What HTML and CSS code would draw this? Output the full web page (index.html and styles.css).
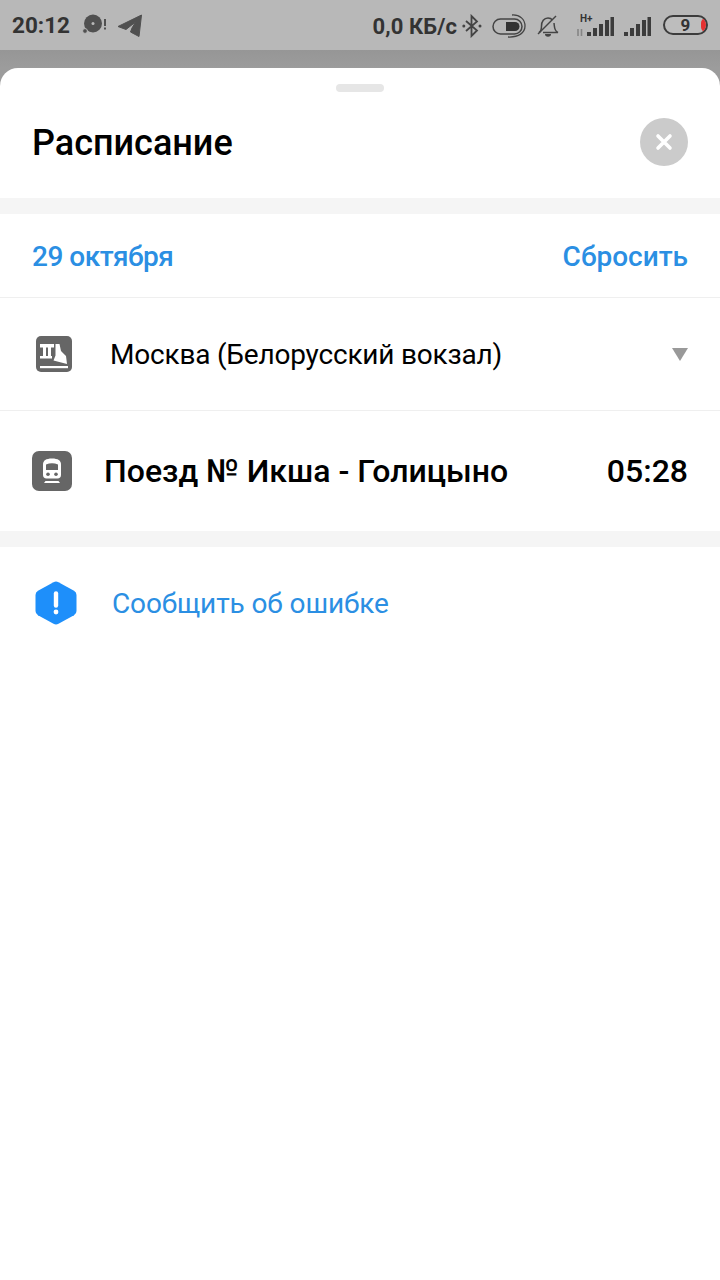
FILE: index.html
```html
<!DOCTYPE html>
<html lang="en">
<head>
  <meta charset="UTF-8">
  <meta name="viewport" content="width=device-width, initial-scale=1.0">
  <title>Расписание</title>
  <link rel="stylesheet" href="styles.css">
</head>
<body>

<div class="statusBar">
  <div class="statusLeft">
    <span class="clock">20:12</span>
    <svg class="icoDisc" width="26" height="24" viewBox="0 0 26 24">
      <circle cx="11" cy="10.500" r="9" fill="#505050"/>
      <circle cx="11" cy="10.500" r="1.500" fill="#b8b8b8"/>
      <circle cx="3" cy="18" r="2.400" fill="#505050" stroke="#b8b8b8" stroke-width="1"/>
      <rect x="22" y="6" width="2" height="7" fill="#505050"/>
      <rect x="22" y="14.500" width="2" height="2" fill="#505050"/>
    </svg>
    <svg class="icoPlane" width="26" height="24" viewBox="0 0 26 24">
      <path d="M1 12.500 24.500 1 22 22.500 13.500 18 15 14 18.500 8 9 15.500 Z" fill="#505050" stroke="#505050" stroke-linejoin="round"/>
    </svg>
  </div>
  <div class="statusRight">
    <span class="speed">0,0 КБ/с</span>
    <svg class="icoBt" width="20" height="24" viewBox="0 0 20 24">
      <path d="M4 7 15 16.500 9.500 22V2l5.500 5.500L4 17" fill="none" stroke="#444" stroke-width="1.800"/>
      <circle cx="1.800" cy="12" r="1.500" fill="#444"/>
      <circle cx="18" cy="12" r="1.500" fill="#444"/>
    </svg>
    <svg class="icoDnd" width="34" height="24" viewBox="0 0 34 24">
      <rect x="1" y="5" width="29" height="15" rx="7.500" fill="none" stroke="#444" stroke-width="1.500"/>
      <path d="M14 8h9a4.500 4.500 0 0 1 0 9h-9z" fill="#333"/>
      <path d="M20 1c8-.5 13 4.500 13 11S27 23.500 16 23" fill="none" stroke="#444" stroke-width="1.300"/>
    </svg>
    <svg class="icoBell" width="22" height="22" viewBox="0 0 22 22">
      <path d="M2 17.500c2-1 2.500-3 2.500-6.500C4.500 6.500 7 3 11 3c2 0 3.500.8 4.500 2M17 8c.5 3.500 0 8 4 9.500H6" fill="none" stroke="#444" stroke-width="1.500"/>
      <path d="M1 19 19 1" stroke="#444" stroke-width="1.500"/>
      <path d="M8 19h6a3 2.800 0 0 1-6 0z" fill="#444"/>
    </svg>
    <div class="signal">
      <span class="hPlus">H+</span>
      <svg width="38" height="21" viewBox="0 0 38 21">
        <path d="M2 12v7M5.500 12v7" stroke="#858585" stroke-width="1.600"/>
        <g fill="#3c3c3c">
          <rect x="11" y="15" width="4" height="4"/>
          <rect x="17" y="11" width="4" height="8"/>
          <rect x="23" y="7" width="4" height="12"/>
          <rect x="29" y="3" width="4" height="16"/>
          <rect x="34.500" y="0" width="3.500" height="19"/>
        </g>
      </svg>
    </div>
    <svg class="bars" width="27" height="21" viewBox="0 0 27 21">
      <g fill="#3c3c3c">
        <rect x="0" y="15" width="4" height="4"/>
        <rect x="6" y="11" width="4" height="8"/>
        <rect x="12" y="7" width="4" height="12"/>
        <rect x="18" y="3" width="4" height="16"/>
        <rect x="23.500" y="0" width="3.500" height="19"/>
      </g>
    </svg>
    <div class="battery">
      <span class="batteryNum">9</span>
      <span class="batteryLow"></span>
    </div>
  </div>
</div>

<div class="dim">
  <div class="sheet">
    <div class="handle"></div>

    <div class="header">
      <h1 class="title">Расписание</h1>
      <div class="close">
        <svg width="18" height="18" viewBox="0 0 18 18">
          <path d="M3 3l12 12M15 3 3 15" stroke="#fff" stroke-width="3.600" stroke-linecap="round"/>
        </svg>
      </div>
    </div>

    <div class="band"></div>

    <div class="dateRow">
      <span class="link linkDate">29 октября</span>
      <span class="link">Сбросить</span>
    </div>

    <div class="stationRow">
      <svg class="icoStation" width="36" height="36" viewBox="0 0 36 36">
        <rect width="36" height="36" rx="5" fill="#666"/>
        <g fill="#fff">
          <rect x="4" y="8" width="14" height="3.500"/>
          <rect x="7" y="11" width="3" height="10"/>
          <rect x="12" y="11" width="3" height="10"/>
          <rect x="4" y="20" width="12" height="2.500"/>
          <path d="M19.500 8h4l1.500 7 5 5 1 8-13.500-3.500 2-5z"/>
          <rect x="4" y="30" width="28" height="2.200"/>
        </g>
      </svg>
      <span class="stationName">Москва (Белорусский вокзал)</span>
      <span class="caret"></span>
    </div>

    <div class="trainRow">
      <svg class="icoTrain" width="40" height="40" viewBox="0 0 40 40">
        <rect width="40" height="40" rx="7" fill="#666"/>
        <path d="M20 7.500c6 0 9 2 9 6V24c0 2.200-1.300 3.500-3.500 3.500h-11c-2.200 0-3.500-1.300-3.500-3.500V13.500c0-4 3-6 9-6z" fill="#fff"/>
        <path d="M14 13.500q6-2.500 12 0V19H14z" fill="#666"/>
        <circle cx="16" cy="23.300" r="1.800" fill="#666"/>
        <circle cx="24" cy="23.300" r="1.800" fill="#666"/>
        <path d="M13.500 30h13l1.500 2H12z" fill="#fff"/>
      </svg>
      <span class="trainName">Поезд № Икша - Голицыно</span>
      <span class="trainTime">05:28</span>
    </div>

    <div class="band"></div>

    <div class="reportRow">
      <svg class="icoReport" width="42" height="44" viewBox="0 0 42 44">
        <path d="M18.500 1.200q2.500-1.200 5 0l15.500 8.600q2.500 1.500 2.500 4.200v16q0 2.700-2.500 4.200l-15.500 8.600q-2.500 1.200-5 0L3 34.200Q.5 32.700.5 30V14q0-2.700 2.500-4.200z" fill="#1e8ffa"/>
        <path d="M21 12.500v12" stroke="#fff" stroke-width="4.400" stroke-linecap="round"/>
        <circle cx="21" cy="31" r="2.400" fill="#fff"/>
      </svg>
      <span class="reportText">Сообщить об ошибке</span>
    </div>
  </div>
</div>

</body>
</html>
```

FILE: styles.css
```css
* {
  padding: 0;
  margin: 0;
  box-sizing: border-box;
}

body {
  width: 720px;
  height: 1280px;
  overflow: hidden;
  font-family: 'Roboto', 'Noto Sans', sans-serif;
  background-color: #fff;
  color: #000;
  display: flex;
  flex-direction: column;
}

.statusBar {
  height: 50px;
  background-color: #b8b8b8;
  color: #333;
  display: flex;
  justify-content: space-between;
  align-items: center;
  padding: 0 12px;
  flex-shrink: 0;
}

.statusLeft, .statusRight {
  display: flex;
  align-items: center;
}

.clock {
  font-size: 22.500px;
  font-weight: 700;
}

.icoDisc {
  margin-left: 12px;
}

.icoPlane {
  margin-left: 9px;
  margin-top: 2px;
}

.speed {
  font-size: 22px;
  font-weight: 700;
  margin-top: 2px;
  letter-spacing: 0.100px;
}

.icoBt {
  margin-left: 5px;
  margin-top: 1px;
}

.icoDnd {
  margin-left: 10px;
  margin-top: 1px;
}

.icoBell {
  margin-left: 11px;
  margin-top: 1px;
}

.signal {
  position: relative;
  margin-left: 17px;
  margin-top: 5px;
  height: 21px;
}

.hPlus {
  position: absolute;
  top: -4px;
  left: 4px;
  font-size: 10px;
  font-weight: 700;
}

.bars {
  margin-left: 10px;
  margin-top: 5px;
}

.battery {
  position: relative;
  margin-left: 12px;
  width: 45px;
  height: 20px;
  border: 2px solid #3c3c3c;
  border-radius: 10px;
  display: flex;
  align-items: center;
  justify-content: center;
  overflow: hidden;
  background-color: #bdbdbd;
}

.batteryNum {
  font-size: 17px;
  font-weight: 700;
}

.batteryLow {
  position: absolute;
  right: 0;
  top: 1px;
  width: 5px;
  height: 14px;
  background-color: #e53030;
  border-radius: 7px 0 0 7px;
}

.dim {
  flex: 1;
  background: linear-gradient(#969696, #9c9c9c 18px);
  padding-top: 18px;
  display: flex;
}

.sheet {
  flex: 1;
  background-color: #fff;
  border-radius: 18px 18px 0 0;
  display: flex;
  flex-direction: column;
  position: relative;
}

.handle {
  position: absolute;
  top: 16px;
  left: 336px;
  width: 48px;
  height: 8px;
  border-radius: 4px;
  background-color: #e6e6e6;
}

.header {
  height: 130px;
  padding: 18px 32px 0;
  display: flex;
  justify-content: space-between;
  align-items: center;
}

.title {
  font-size: 36px;
  font-weight: 500;
  padding-top: 2px;
}

.close {
  width: 48px;
  height: 48px;
  border-radius: 50%;
  background-color: #cbcbcb;
  display: flex;
  align-items: center;
  justify-content: center;
}

.band {
  height: 16px;
  background-color: #f5f5f5;
  flex-shrink: 0;
}

.dateRow {
  height: 84px;
  padding: 2px 32px 0;
  display: flex;
  justify-content: space-between;
  align-items: center;
  border-bottom: 1px solid #efefef;
}

.link {
  font-size: 28px;
  font-weight: 500;
  color: #2b8fe3;
}

.linkDate {
  letter-spacing: -0.500px;
}

.stationRow {
  height: 113px;
  padding: 0 32px 0 36px;
  display: flex;
  align-items: center;
  border-bottom: 1px solid #efefef;
}

.stationName {
  margin-left: 38px;
  font-size: 28px;
  letter-spacing: -0.200px;
  flex: 1;
}

.caret {
  width: 0;
  height: 0;
  border-left: 8px solid transparent;
  border-right: 8px solid transparent;
  border-top: 13px solid #999;
}

.trainRow {
  height: 120px;
  padding: 0 32px;
  display: flex;
  align-items: center;
}

.trainName {
  margin-left: 32px;
  flex: 1;
  font-size: 32px;
  font-weight: 500;
}

.trainTime {
  font-size: 32px;
  font-weight: 500;
}

.reportRow {
  height: 112px;
  padding: 0 0 0 35px;
  display: flex;
  align-items: center;
}

.reportText {
  margin-left: 35px;
  font-size: 28px;
  letter-spacing: -0.100px;
  color: #2b8fe3;
}
```
